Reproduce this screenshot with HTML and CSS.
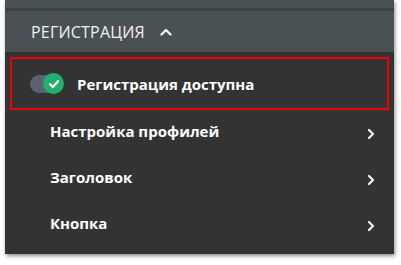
FILE: index.html
```html
<!DOCTYPE html>
<html lang="ru">
<head>
<meta charset="utf-8">
<link rel="stylesheet" href="styles.css">
</head>
<body>
<div class="panel">
  <div class="topstrip"></div>
  <div class="header">
    <span class="header-title">РЕГИСТРАЦИЯ</span>
    <svg class="chev-up" width="12" height="8" viewBox="0 0 12 8"><path d="M1.5 6.5 L6 2 L10.5 6.5" fill="none" stroke="#f2f2f2" stroke-width="2.4" stroke-linecap="round" stroke-linejoin="round"/></svg>
  </div>
  <div class="body">
    <div class="highlight">
      <div class="toggle">
        <div class="track"></div>
        <div class="knob">
          <svg width="12" height="10" viewBox="0 0 12 10"><path d="M2 5.2 L4.8 8 L10 2.2" fill="none" stroke="#fff" stroke-width="2.2" stroke-linecap="round" stroke-linejoin="round"/></svg>
        </div>
      </div>
      <span class="toggle-label">Регистрация доступна</span>
    </div>
    <div class="row"><span class="row-label">Настройка профилей</span><svg class="chev" width="8" height="12" viewBox="0 0 8 12"><path d="M2 2 L6 6 L2 10" fill="none" stroke="#f2f2f2" stroke-width="2.2" stroke-linecap="round" stroke-linejoin="round"/></svg></div>
    <div class="row"><span class="row-label">Заголовок</span><svg class="chev" width="8" height="12" viewBox="0 0 8 12"><path d="M2 2 L6 6 L2 10" fill="none" stroke="#f2f2f2" stroke-width="2.2" stroke-linecap="round" stroke-linejoin="round"/></svg></div>
    <div class="row"><span class="row-label">Кнопка</span><svg class="chev" width="8" height="12" viewBox="0 0 8 12"><path d="M2 2 L6 6 L2 10" fill="none" stroke="#f2f2f2" stroke-width="2.2" stroke-linecap="round" stroke-linejoin="round"/></svg></div>
  </div>
</div>
</body>
</html>
```

FILE: styles.css
```css
html, body {
  margin: 0;
  padding: 0;
  background: #ffffff;
}
body {
  font-family: "Open Sans", "Noto Sans", sans-serif;
  width: 401px;
  height: 265px;
  overflow: hidden;
}
.panel {
  margin-left: 5px;
  width: 389px;
  height: 254px;
  background: #333333;
  box-shadow: 1px 2px 4px rgba(0, 0, 0, 0.45);
  display: flex;
  flex-direction: column;
}
.topstrip {
  height: 8px;
  background: #4a5155;
  border-bottom: 3px solid #3b4144;
}
.header {
  height: 41px;
  background: #4a5155;
  display: flex;
  align-items: center;
  padding-left: 26px;
}
.header-title {
  color: #f2f2f2;
  font-size: 16px;
  letter-spacing: 0.2px;
}
.chev-up {
  margin-left: 15px;
  margin-top: 1px;
}
.body {
  padding: 5px 5px 0 5px;
  display: flex;
  flex-direction: column;
}
.highlight {
  height: 49px;
  border: 2px solid #ee0000;
  display: flex;
  align-items: center;
  padding-left: 18px;
}
.toggle {
  position: relative;
  width: 34px;
  height: 21px;
}
.track {
  position: absolute;
  left: 0;
  top: 2px;
  width: 30px;
  height: 18px;
  border-radius: 9px;
  background: #5a6170;
}
.knob {
  position: absolute;
  left: 13px;
  top: 0;
  width: 21px;
  height: 21px;
  border-radius: 50%;
  background: #22b06e;
  display: flex;
  align-items: center;
  justify-content: center;
}
.toggle-label {
  margin-left: 13px;
  color: #ffffff;
  font-weight: 700;
  font-size: 15px;
}
.row {
  height: 46px;
  display: flex;
  align-items: center;
  padding-left: 40px;
  padding-right: 14px;
}
.row-label {
  flex: 1;
  color: #ffffff;
  font-weight: 700;
  font-size: 15px;
  margin-top: -4px;
}
.chev {
  margin-top: 2px;
}
```
